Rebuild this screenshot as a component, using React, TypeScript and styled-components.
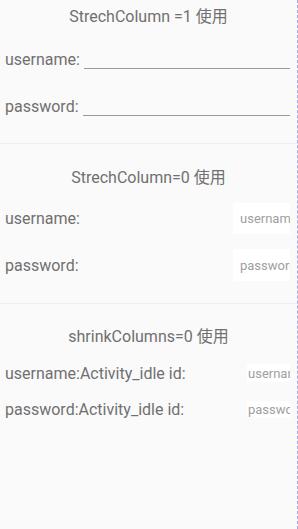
import styled, { createGlobalStyle } from "styled-components";

const GlobalStyle = createGlobalStyle`
  html, body {
    margin: 0;
    padding: 0;
    background: #fafafa;
  }
  body {
    font-family: Roboto, "Noto Sans CJK SC", sans-serif;
  }
`;

const Screen = styled.div`
  width: 298px;
  height: 529px;
  box-sizing: border-box;
  border-right: 1px dashed #a4a4ee;
  background: #fafafa;
  overflow: hidden;
`;

const Section = styled.div<{ $height?: number }>`
  height: ${(p) => (p.$height ? `${p.$height}px` : "auto")};
  border-bottom: ${(p) => (p.$height ? "1px solid #eeeeee" : "none")};
`;

const Title = styled.div<{ $top: number }>`
  padding-top: ${(p) => p.$top}px;
  height: 20px;
  line-height: 20px;
  text-align: center;
  font-size: 16px;
  color: #707070;
`;

const Row = styled.div<{ $top: number; $height: number }>`
  display: flex;
  align-items: center;
  margin-top: ${(p) => p.$top}px;
  height: ${(p) => p.$height}px;
  padding: 0 7px 0 5px;
`;

const Label = styled.span`
  font-size: 16px;
  color: #707070;
  white-space: nowrap;
  flex-shrink: 0;
`;

const LineInput = styled.div`
  flex: 1;
  margin-left: 4px;
  align-self: flex-end;
  height: 9px;
  margin-bottom: 3px;
  border-bottom: 1px solid #9a9a9a;
`;

const Spacer = styled.div`
  flex: 1;
`;

const BoxInput = styled.div<{ $w: number; $h: number; $pad: number }>`
  width: ${(p) => p.$w}px;
  height: ${(p) => p.$h}px;
  background: #ffffff;
  box-sizing: border-box;
  padding-left: ${(p) => p.$pad}px;
  display: flex;
  align-items: center;
  overflow: hidden;
  white-space: nowrap;
  font-size: 13px;
  color: #a0a0a0;
  flex-shrink: 0;
`;

export default function App() {
  return (
    <>
      <GlobalStyle />
      <Screen>
        <Section $height={143}>
          <Title $top={7}>StrechColumn =1 使用</Title>
          <Row $top={19} $height={26}>
            <Label>username:</Label>
            <LineInput />
          </Row>
          <Row $top={21} $height={26}>
            <Label>password:</Label>
            <LineInput />
          </Row>
        </Section>
        <Section $height={159}>
          <Title $top={24}>StrechColumn=0 使用</Title>
          <Row $top={15} $height={31}>
            <Label>username:</Label>
            <Spacer />
            <BoxInput $w={57} $h={31} $pad={7}>
              username
            </BoxInput>
          </Row>
          <Row $top={15} $height={32}>
            <Label>password:</Label>
            <Spacer />
            <BoxInput $w={57} $h={32} $pad={7}>
              password
            </BoxInput>
          </Row>
        </Section>
        <Section>
          <Title $top={23}>shrinkColumns=0 使用</Title>
          <Row $top={17} $height={18}>
            <Label>username:Activity_idle id:</Label>
            <Spacer />
            <BoxInput $w={43} $h={18} $pad={1}>
              username
            </BoxInput>
          </Row>
          <Row $top={19} $height={17}>
            <Label>password:Activity_idle id:</Label>
            <Spacer />
            <BoxInput $w={43} $h={17} $pad={1}>
              password
            </BoxInput>
          </Row>
        </Section>
      </Screen>
    </>
  );
}
